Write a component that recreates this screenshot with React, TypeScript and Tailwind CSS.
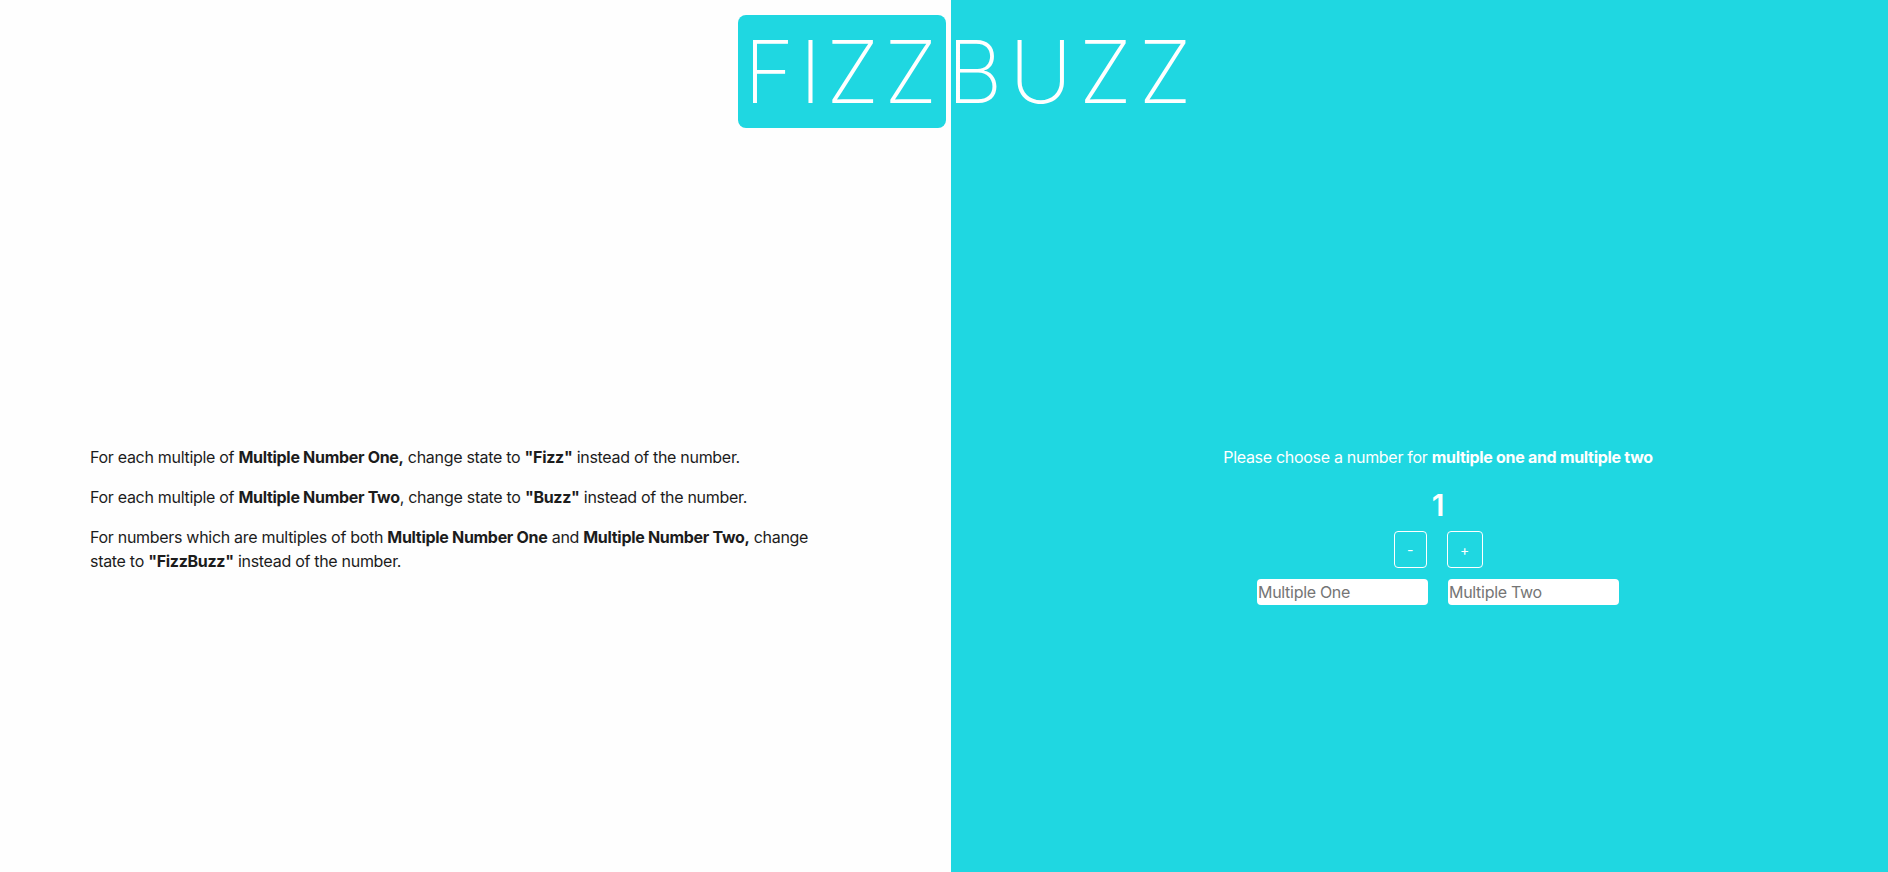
import { useState } from 'react';

const font = "font-['Inter','Liberation_Sans',sans-serif]";

export default function App() {
  const [count, setCount] = useState(1);

  return (
    <div className={`flex h-[872px] w-full tracking-[-0.3px] ${font}`}>
      {/* left: rules */}
      <div className="flex w-[951px] shrink-0 flex-col bg-[#fefefe]">
        <div className="flex justify-end pr-[5px] pt-[15px]">
          <div className="flex h-[113px] w-[208px] items-center rounded-lg bg-[#1fd7e1] pl-[6px]">
            <span className="text-[86px] font-extralight leading-none tracking-[5px] text-white">FIZZ</span>
          </div>
        </div>
        <div className="mt-[317px] w-[840px] pl-[90px] text-base leading-6 text-[#1c1c1c]">
          <p className="mb-4">
            For each multiple of <b>Multiple Number One,</b> change state to <b>"Fizz"</b> instead of the number.
          </p>
          <p className="mb-4">
            For each multiple of <b>Multiple Number Two</b>, change state to <b>"Buzz"</b> instead of the number.
          </p>
          <p>
            For numbers which are multiples of both <b>Multiple Number One</b> and <b>Multiple Number Two,</b> change
            state to <b>"FizzBuzz"</b> instead of the number.
          </p>
        </div>
      </div>

      {/* right: controls */}
      <div className="flex flex-1 flex-col bg-[#1fd7e1]">
        <div className="mt-[15px] flex h-[113px] items-center">
          <span className="-ml-[4px] text-[86px] font-extralight leading-none tracking-[7px] text-white">BUZZ</span>
        </div>
        <div className="mt-[317px] flex flex-col items-center pl-[37px] text-white">
          <p className="text-base leading-6">
            Please choose a number for <b>multiple one and multiple two</b>
          </p>
          <div className="mt-[18px] text-[30px] font-semibold leading-9">{count}</div>
          <div className="mt-2 flex gap-5">
            <button
              onClick={() => setCount(count - 1)}
              className="flex h-[37px] w-[33px] items-center justify-center rounded border border-white text-sm"
            >
              -
            </button>
            <button
              onClick={() => setCount(count + 1)}
              className="flex h-[37px] w-[36px] items-center justify-center rounded border border-white text-sm"
            >
              +
            </button>
          </div>
          <div className="mt-[11px] flex gap-5">
            <input
              placeholder="Multiple One"
              className="h-[26px] w-[171px] rounded bg-white px-px text-base text-[#333] placeholder:text-[#757575] focus:outline-none"
            />
            <input
              placeholder="Multiple Two"
              className="h-[26px] w-[171px] rounded bg-white px-px text-base text-[#333] placeholder:text-[#757575] focus:outline-none"
            />
          </div>
        </div>
      </div>
    </div>
  );
}
